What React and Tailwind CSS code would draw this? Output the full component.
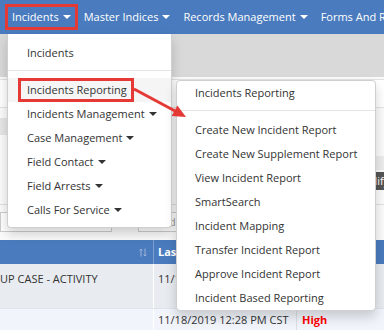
import React from "react";

function WhiteCaret() {
  return <span className="inline-block w-0 h-0 border-l-[4px] border-r-[4px] border-t-[4px] border-l-transparent border-r-transparent border-t-white" />;
}
function DarkCaret() {
  return <span className="inline-block w-0 h-0 border-l-[4px] border-r-[4px] border-t-[4px] border-l-transparent border-r-transparent border-t-[#333]" />;
}
function RightCaret() {
  return <span className="inline-block w-0 h-0 border-t-[4px] border-b-[4px] border-l-[4px] border-t-transparent border-b-transparent border-l-[#333]" />;
}

function NavItem({ label }) {
  return (
    <div className="flex items-center gap-[4px]">
      <span>{label}</span>
      <WhiteCaret />
    </div>
  );
}

function MenuItem({ label, caret, active }) {
  return (
    <div className={active ? "h-[24px] flex items-center gap-[4px] pl-[19px] bg-[#f5f5f5]" : "h-[24px] flex items-center gap-[4px] pl-[19px]"}>
      <span>{label}</span>
      {caret === "down" && <DarkCaret />}
      {caret === "right" && <RightCaret />}
    </div>
  );
}

function SubItem({ label }) {
  return <div className="h-[24px] flex items-center pl-[18px]">{label}</div>;
}

function SortIcon() {
  return (
    <svg width="8" height="9" viewBox="0 0 8 9" fill="none" stroke="#9fb5d6" strokeWidth="1">
      <path d="M2 8.5V1M0.5 2.5L2 1L3.5 2.5" />
      <path d="M6 0.5V8M4.5 6.5L6 8L7.5 6.5" />
    </svg>
  );
}

export default function App() {
  const sub = [
    "Create New Incident Report",
    "Create New Supplement Report",
    "View Incident Report",
    "SmartSearch",
    "Incident Mapping",
    "Transfer Incident Report",
    "Approve Incident Report",
    "Incident Based Reporting",
  ];
  return (
    <div className="relative w-[384px] h-[330px] overflow-hidden bg-white font-['Open_Sans',sans-serif] text-[11px] text-[#333] whitespace-nowrap">
      {/* nav bar */}
      <nav className="h-[34px] bg-[#4a7bbe] flex items-center pl-[12px] gap-[13px] text-white">
        <NavItem label="Incidents" />
        <NavItem label="Master Indices" />
        <NavItem label="Records Management" />
        <NavItem label="Forms And Reports" />
      </nav>

      {/* grey header band */}
      <div className="h-[43px] bg-[#d9d9d9]" />

      {/* form panel */}
      <div className="h-[163px] bg-[#fbfbfb] flex flex-col">
        <div className="h-[2px]" />
        <div className="h-[29px] bg-white border-t border-b border-[#e2e2e2]" />
        <div className="h-[10px]" />
        <div className="h-[17px] flex">
          <div className="w-[120px] bg-[#e6e6e6]" />
        </div>
        <div className="h-[21px]" />
        <div className="h-[14px] flex justify-end">
          <div className="w-[100px] bg-[#ececec]" />
        </div>
        <div className="h-[22px] flex items-start pt-[2px] pl-[348px] overflow-hidden">
          <div className="h-[18px] px-[6px] bg-[#555] text-white flex items-center">Modify</div>
        </div>
        <div className="h-[12px]" />
        <div className="h-[28px] border-t border-[#e0e0e0] flex items-end gap-[26px]">
          <div className="w-[112px] h-[20px] bg-white border border-[#ccc]" />
          <div className="w-[122px] h-[20px] bg-white border border-[#ccc] flex items-center pl-[30px] text-[#999]">dd/mm/yyyy</div>
        </div>
        <div className="h-[8px]" />
      </div>

      {/* table header */}
      <div className="h-[24px] bg-[#4a7bbe] flex text-white">
        <div className="w-[153px] flex items-center justify-end pr-[6px]">
          <SortIcon />
        </div>
        <div className="w-px bg-[#7fa0cf]" />
        <div className="flex-1 flex items-center pl-[4px] font-bold">Last Updated</div>
      </div>
      {/* row 1 */}
      <div className="h-[44px] bg-[#e8ebf0] flex">
        <div className="w-[153px] pt-[7px] overflow-hidden">UP CASE - ACTIVITY</div>
        <div className="w-px bg-white" />
        <div className="w-[142px] pl-[4px] pt-[7px]">11/18/2019 12:28 PM CST</div>
        <div className="w-px bg-white" />
        <div className="pl-[5px] pt-[7px] font-bold text-[#ff0000]">High</div>
      </div>
      {/* row 2 */}
      <div className="h-[22px] bg-[#f1f5fb] flex border-t border-[#dfe4eb]">
        <div className="w-[153px]" />
        <div className="w-px bg-white" />
        <div className="w-[142px] pl-[4px] pt-[3px]">11/18/2019 12:28 PM CST</div>
        <div className="w-px bg-[#dcdfe4]" />
        <div className="pl-[5px] pt-[3px] font-bold text-[#ff0000]">High</div>
      </div>

      {/* dropdown menu */}
      <div className="absolute left-[7px] top-[34px] w-[165px] bg-white border border-t-0 border-[#cfcfcf] rounded-b-[4px] shadow-[0_6px_12px_rgba(0,0,0,0.175)] pt-[7px] pb-[5px]">
        <MenuItem label="Incidents" />
        <div className="mt-[5px] mb-[7px] h-px bg-[#e5e5e5]" />
        <MenuItem label="Incidents Reporting" caret="right" active />
        <MenuItem label="Incidents Management" caret="down" />
        <MenuItem label="Case Management" caret="down" />
        <MenuItem label="Field Contact" caret="down" />
        <MenuItem label="Field Arrests" caret="down" />
        <MenuItem label="Calls For Service" caret="down" />
      </div>

      {/* submenu */}
      <div className="absolute left-[176px] top-[80px] w-[200px] bg-white border border-[#cfcfcf] rounded-[4px] shadow-[0_6px_12px_rgba(0,0,0,0.175)]">
        <SubItem label="Incidents Reporting" />
        <div className="mt-[5px] mb-[7px] h-px bg-[#e5e5e5]" />
        {sub.map((s) => (
          <SubItem key={s} label={s} />
        ))}
      </div>

      {/* annotation boxes */}
      <div className="absolute left-[5px] top-[4px] w-[73px] h-[26px] border-[3px] border-[#e53935]" />
      <div className="absolute left-[18px] top-[78px] w-[116px] h-[24px] border-[3px] border-[#e53935]" />

      {/* arrow */}
      <svg className="absolute left-0 top-0 pointer-events-none" width="384" height="330" viewBox="0 0 384 330">
        <line x1="134" y1="89" x2="176" y2="111.5" stroke="#e53935" strokeWidth="3" />
        <polygon points="186,117 171.7,116.1 177.4,105.6" fill="#e53935" />
      </svg>
    </div>
  );
}
